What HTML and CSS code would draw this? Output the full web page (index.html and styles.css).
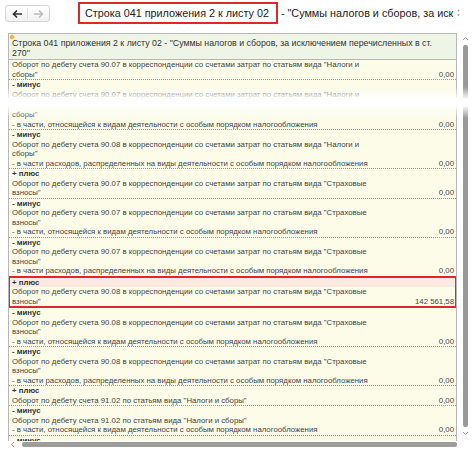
FILE: index.html
```html
<!DOCTYPE html>
<html lang="ru">
<head>
<meta charset="utf-8">
<title>Строка 041</title>
<link rel="stylesheet" href="styles.css">
</head>
<body>
<div class="page">
  <div class="topbar">
    <div class="nav">
      <span class="btn"><svg width="12" height="10" viewBox="0 0 12 10"><path d="M11 5H2.5M6 1.5L2.5 5L6 8.5" fill="none" stroke="#333" stroke-width="1.7"/></svg></span>
      <span class="sep"></span>
      <span class="btn"><svg width="12" height="10" viewBox="0 0 12 10"><path d="M1 5H9.5M6 1.5L9.5 5L6 8.5" fill="none" stroke="#bbb" stroke-width="1.5"/></svg></span>
    </div>
    <div class="title"><span class="hl">Строка 041 приложения 2 к листу 02</span><span class="rest">&nbsp;- "Суммы налогов и сборов, за иск</span></div>
    <svg class="more" width="3" height="8" viewBox="0 0 3 8"><circle cx="1.5" cy="1.5" r="1" fill="#aaa"/><circle cx="1.5" cy="6" r="1" fill="#aaa"/></svg>
  </div>
  <div class="frame">
    <div class="tablewrap">
      <div class="table">
        <div class="head">
          <div class="ln">Строка 041 приложения 2 к листу 02 - "Суммы налогов и сборов, за исключением перечисленных в ст.</div>
          <div class="ln">270"</div>
        </div>
        <div class="grp">
          <div class="ln">Оборот по дебету счета 90.07 в корреспонденции со счетами затрат по статьям вида "Налоги и</div>
          <div class="ln">сборы"<span class="amt">0,00</span></div>
        </div>
        <div class="grp">
          <div class="ln b">- минус</div>
          <div class="ln">Оборот по дебету счета 90.07 в корреспонденции со счетами затрат по статьям вида "Налоги и</div>
          <div class="gap"></div>
          <div class="ln">сборы"</div>
          <div class="ln">- в части, относящейся к видам деятельности с особым порядком налогообложения<span class="amt">0,00</span></div>
        </div>
        <div class="grp">
          <div class="ln b">- минус</div>
          <div class="ln">Оборот по дебету счета 90.08 в корреспонденции со счетами затрат по статьям вида "Налоги и</div>
          <div class="ln">сборы"</div>
          <div class="ln">- в части расходов, распределенных на виды деятельности с особым порядком налогообложения<span class="amt">0,00</span></div>
        </div>
        <div class="grp">
          <div class="ln b">+ плюс</div>
          <div class="ln">Оборот по дебету счета 90.07 в корреспонденции со счетами затрат по статьям вида "Страховые</div>
          <div class="ln">взносы"<span class="amt">0,00</span></div>
        </div>
        <div class="grp">
          <div class="ln b">- минус</div>
          <div class="ln">Оборот по дебету счета 90.07 в корреспонденции со счетами затрат по статьям вида "Страховые</div>
          <div class="ln">взносы"</div>
          <div class="ln">- в части, относящейся к видам деятельности с особым порядком налогообложения<span class="amt">0,00</span></div>
        </div>
        <div class="grp">
          <div class="ln b">- минус</div>
          <div class="ln">Оборот по дебету счета 90.07 в корреспонденции со счетами затрат по статьям вида "Страховые</div>
          <div class="ln">взносы"</div>
          <div class="ln">- в части расходов, распределенных на виды деятельности с особым порядком налогообложения<span class="amt">0,00</span></div>
        </div>
        <div class="grp mark">
          <div class="ln b cur">+ плюс</div>
          <div class="ln">Оборот по дебету счета 90.08 в корреспонденции со счетами затрат по статьям вида "Страховые</div>
          <div class="ln">взносы"<span class="amt">142 561,58</span></div>
        </div>
        <div class="grp">
          <div class="ln b">- минус</div>
          <div class="ln">Оборот по дебету счета 90.08 в корреспонденции со счетами затрат по статьям вида "Страховые</div>
          <div class="ln">взносы"</div>
          <div class="ln">- в части, относящейся к видам деятельности с особым порядком налогообложения<span class="amt">0,00</span></div>
        </div>
        <div class="grp">
          <div class="ln b">- минус</div>
          <div class="ln">Оборот по дебету счета 90.08 в корреспонденции со счетами затрат по статьям вида "Страховые</div>
          <div class="ln">взносы"</div>
          <div class="ln">- в части расходов, распределенных на виды деятельности с особым порядком налогообложения<span class="amt">0,00</span></div>
        </div>
        <div class="grp">
          <div class="ln b">+ плюс</div>
          <div class="ln">Оборот по дебету счета 91.02 по статьям вида "Налоги и сборы"<span class="amt">0,00</span></div>
        </div>
        <div class="grp">
          <div class="ln b">- минус</div>
          <div class="ln">Оборот по дебету счета 91.02 по статьям вида "Налоги и сборы"</div>
          <div class="ln">- в части, относящейся к видам деятельности с особым порядком налогообложения<span class="amt">0,00</span></div>
        </div>
        <div class="grp">
          <div class="ln b">- минус</div>
        </div>
      </div>
      <div class="hscroll">
        <svg class="harr" width="5" height="7" viewBox="0 0 5 7"><path d="M4 1L1.5 3.5L4 6" fill="none" stroke="#999" stroke-width="1"/></svg>
        <div class="hthumb"></div>
      </div>
    </div>
    <div class="vscroll">
      <svg width="7" height="5" viewBox="0 0 7 5"><path d="M1 4L3.5 1.5L6 4" fill="none" stroke="#999" stroke-width="1"/></svg>
      <div class="vthumb"></div>
      <svg width="7" height="5" viewBox="0 0 7 5"><path d="M1 1L3.5 3.5L6 1" fill="none" stroke="#999" stroke-width="1"/></svg>
    </div>
  </div>
  <div class="tear"></div>
</div>
</body>
</html>
```

FILE: styles.css
```css
* { box-sizing: border-box; }
html, body { margin: 0; padding: 0; background: #fff; }
body {
  font-family: "Liberation Sans", Arial, sans-serif;
  color: #333;
  width: 474px;
  height: 453px;
  overflow: hidden;
}
.page { position: relative; height: 453px; }

.topbar {
  height: 33px;
  display: flex;
  align-items: flex-start;
  padding: 2px 0 0 5px;
}
.nav {
  margin-top: 3px;
  width: 45px;
  height: 17px;
  border: 1px solid #d4d4d4;
  border-radius: 3px;
  background: linear-gradient(#ffffff, #f1f1f1);
  display: flex;
  align-items: center;
}
.nav .btn { flex: 1; display: flex; justify-content: center; align-items: center; }
.nav .sep { width: 1px; height: 11px; background: #dedede; }

.title {
  margin-left: 28px;
  font-size: 10.8px;
  color: #222;
  display: flex;
  align-items: center;
  white-space: nowrap;
}
.hl {
  border: 2px solid #e0262b;
  padding: 2px 7px 2px 5px;
  line-height: 14px;
}
.more { margin: 7px 0 0 4px; }

.frame {
  display: flex;
  margin-left: 8px;
  height: 417px;
}
.tablewrap {
  width: 449px;
  display: flex;
  flex-direction: column;
}
.table {
  position: relative;
  height: 409px;
  overflow: hidden;
  border: 1px solid #b8b8b8;
  border-bottom: none;
  background: #fcfce8;
  font-size: 7.8px;
  color: #444;
}
.table::before {
  content: "";
  position: absolute;
  left: 1px;
  top: 1px;
  width: 4px;
  height: 4px;
  background: #f0b040;
  transform: rotate(45deg);
}
.ln {
  height: 9.5px;
  line-height: 9.5px;
  white-space: nowrap;
  display: flex;
  padding: 0 2px 0 3px;
}
.amt { margin-left: auto; }
.b { font-weight: bold; color: #333; }
.head {
  background: #eff5e6;
  border-bottom: 1px solid #b8b8b8;
  padding: 5px 0 1px;
  color: #333;
  font-size: 8.8px;
}
.head .ln { height: 9.6px; line-height: 9.6px; }
.grp { border-bottom: 1px dotted #9a9a9a; }
.gap { height: 11px; }
.mark {
  border: 2px solid #e0262b;
  margin: -1px -1px 0;
}
.mark .ln { padding-left: 2px; padding-right: 1px; }
.cur { background: #fbe9e2; }

.hscroll {
  flex: 1;
  display: flex;
  align-items: center;
  padding: 0 0 2px 2px;
}
.harr { margin-right: 7px; }
.hthumb {
  flex: 1;
  height: 5px;
  border-radius: 2px;
  background: #9d9d9d;
}
.vscroll {
  flex: 1;
  display: flex;
  flex-direction: column;
  align-items: center;
  padding: 3px 0 14px 0;
  gap: 4px;
}
.vthumb {
  flex: 1;
  width: 5px;
  border-radius: 2px;
  background: #9a9a9a;
}

.tear {
  position: absolute;
  left: 0;
  right: 0;
  top: 87px;
  height: 31px;
  background: linear-gradient(rgba(255,255,255,0) 0%, #fff 40%, #fff 60%, rgba(255,255,255,0) 100%);
}
```
